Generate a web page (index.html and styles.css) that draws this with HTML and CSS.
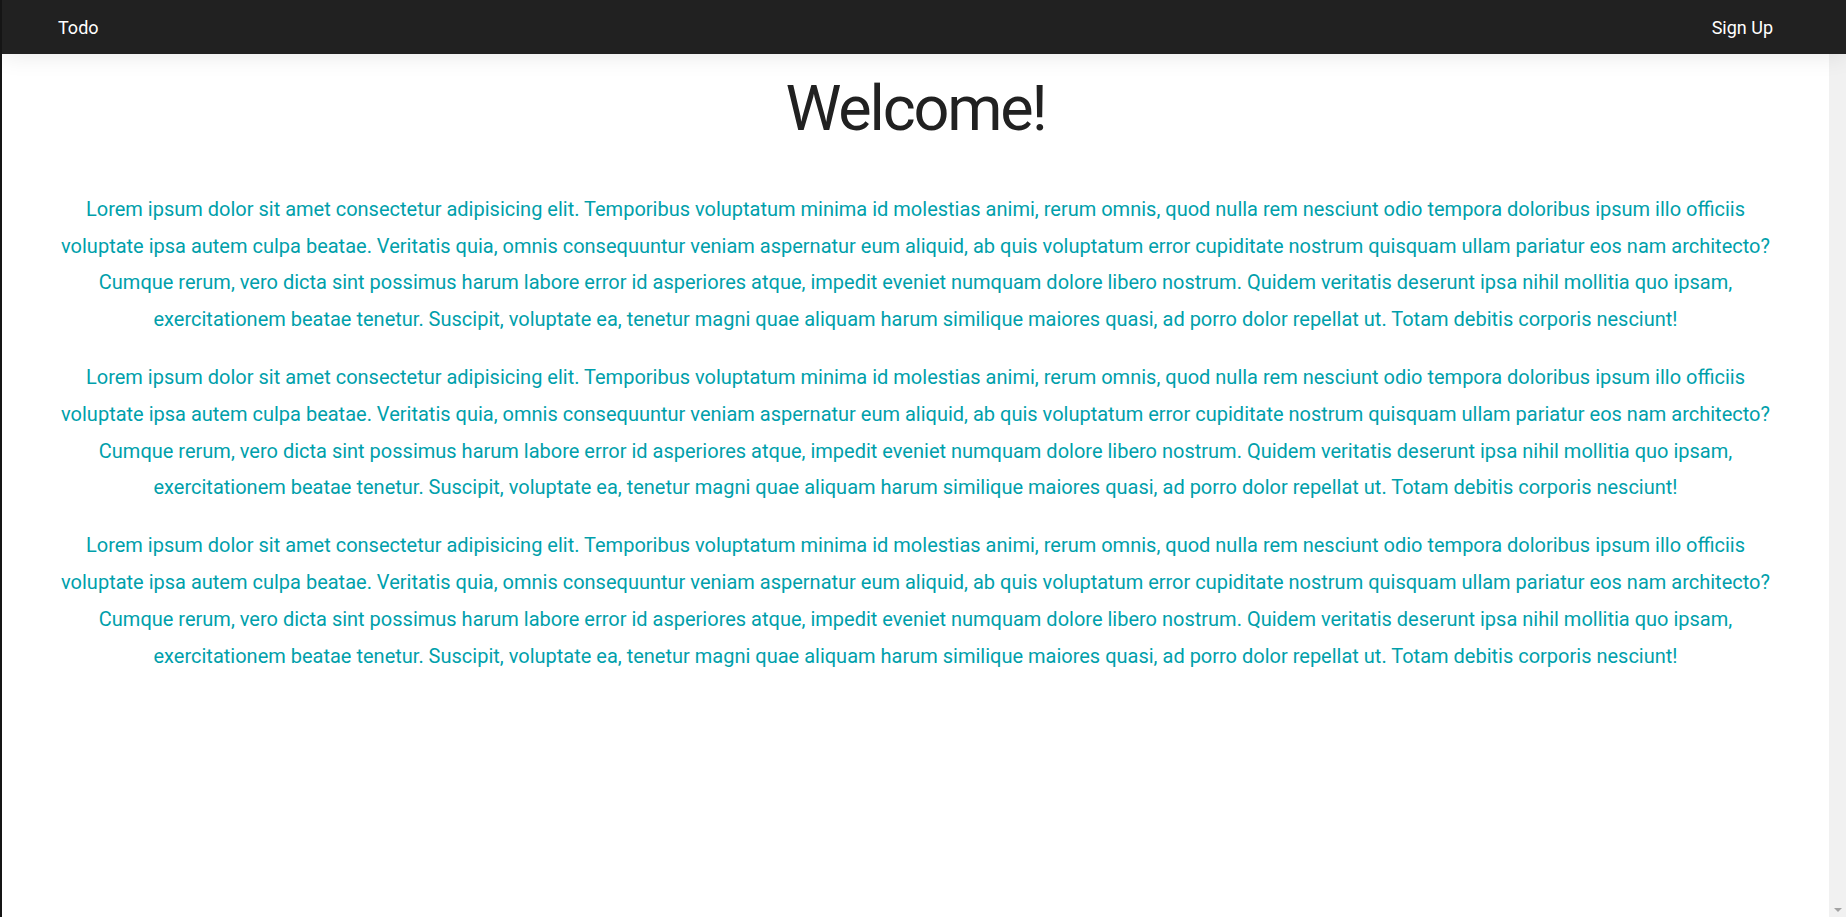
FILE: index.html
```html
<!DOCTYPE html>
<html lang="en">
<head>
<meta charset="utf-8">
<title>Todo</title>
<link rel="stylesheet" href="styles.css">
</head>
<body>
<nav class="navbar">
  <a class="brand" href="#">Todo</a>
  <a class="nav-link" href="#">Sign Up</a>
</nav>
<div class="page">
  <main class="main">
    <div class="container">
      <h1 class="title">Welcome!</h1>
      <p class="text">Lorem ipsum dolor sit amet consectetur adipisicing elit. Temporibus voluptatum minima id molestias animi, rerum omnis, quod nulla rem nesciunt odio tempora doloribus ipsum illo officiis voluptate ipsa autem culpa beatae. Veritatis quia, omnis consequuntur veniam aspernatur eum aliquid, ab quis voluptatum error cupiditate nostrum quisquam ullam pariatur eos nam architecto? Cumque rerum, vero dicta sint possimus harum labore error id asperiores atque, impedit eveniet numquam dolore libero nostrum. Quidem veritatis deserunt ipsa nihil mollitia quo ipsam, exercitationem beatae tenetur. Suscipit, voluptate ea, tenetur magni quae aliquam harum similique maiores quasi, ad porro dolor repellat ut. Totam debitis corporis nesciunt!</p>
      <p class="text">Lorem ipsum dolor sit amet consectetur adipisicing elit. Temporibus voluptatum minima id molestias animi, rerum omnis, quod nulla rem nesciunt odio tempora doloribus ipsum illo officiis voluptate ipsa autem culpa beatae. Veritatis quia, omnis consequuntur veniam aspernatur eum aliquid, ab quis voluptatum error cupiditate nostrum quisquam ullam pariatur eos nam architecto? Cumque rerum, vero dicta sint possimus harum labore error id asperiores atque, impedit eveniet numquam dolore libero nostrum. Quidem veritatis deserunt ipsa nihil mollitia quo ipsam, exercitationem beatae tenetur. Suscipit, voluptate ea, tenetur magni quae aliquam harum similique maiores quasi, ad porro dolor repellat ut. Totam debitis corporis nesciunt!</p>
      <p class="text">Lorem ipsum dolor sit amet consectetur adipisicing elit. Temporibus voluptatum minima id molestias animi, rerum omnis, quod nulla rem nesciunt odio tempora doloribus ipsum illo officiis voluptate ipsa autem culpa beatae. Veritatis quia, omnis consequuntur veniam aspernatur eum aliquid, ab quis voluptatum error cupiditate nostrum quisquam ullam pariatur eos nam architecto? Cumque rerum, vero dicta sint possimus harum labore error id asperiores atque, impedit eveniet numquam dolore libero nostrum. Quidem veritatis deserunt ipsa nihil mollitia quo ipsam, exercitationem beatae tenetur. Suscipit, voluptate ea, tenetur magni quae aliquam harum similique maiores quasi, ad porro dolor repellat ut. Totam debitis corporis nesciunt!</p>
    </div>
  </main>
  <div class="scrollbar" aria-hidden="true"><span class="scroll-arrow"></span></div>
</div>
</body>
</html>
```
FILE: styles.css
```css
html, body {
  margin: 0;
  height: 100%;
}
body {
  display: flex;
  flex-direction: column;
  overflow: hidden;
  border-left: 2px solid #151515;
  background: #fff;
  font-family: Roboto, "Liberation Sans", sans-serif;
  box-sizing: border-box;
}
.navbar {
  position: relative;
  z-index: 2;
  flex: 0 0 54px;
  display: flex;
  align-items: center;
  justify-content: space-between;
  padding: 0 73px 0 56px;
  background: #212121;
  box-shadow: 0 2px 24px rgba(0, 0, 0, 0.09);
}
.brand, .nav-link {
  color: #fff;
  text-decoration: none;
  font-size: 18px;
}
.page {
  flex: 1;
  display: flex;
  min-height: 0;
}
.main {
  flex: 1;
  overflow: hidden;
}
.scrollbar {
  flex: 0 0 17px;
  display: flex;
  flex-direction: column;
  justify-content: flex-end;
  align-items: center;
  background: #f1f1f1;
  padding-bottom: 5px;
  box-sizing: border-box;
}
.scroll-arrow {
  width: 0;
  height: 0;
  border-left: 4px solid transparent;
  border-right: 4px solid transparent;
  border-top: 4px solid #a3a3a3;
}
.container {
  width: 1722px;
  margin: 0 auto;
  text-align: center;
}
.title {
  margin: 20px 0 47.5px;
  font-size: 63px;
  font-weight: 400;
  line-height: 1.1;
  letter-spacing: -2.2px;
  color: #212121;
}
.text {
  margin: 0 0 21.5px;
  font-size: 20px;
  line-height: 36.7px;
  color: #009fab;
}
```
